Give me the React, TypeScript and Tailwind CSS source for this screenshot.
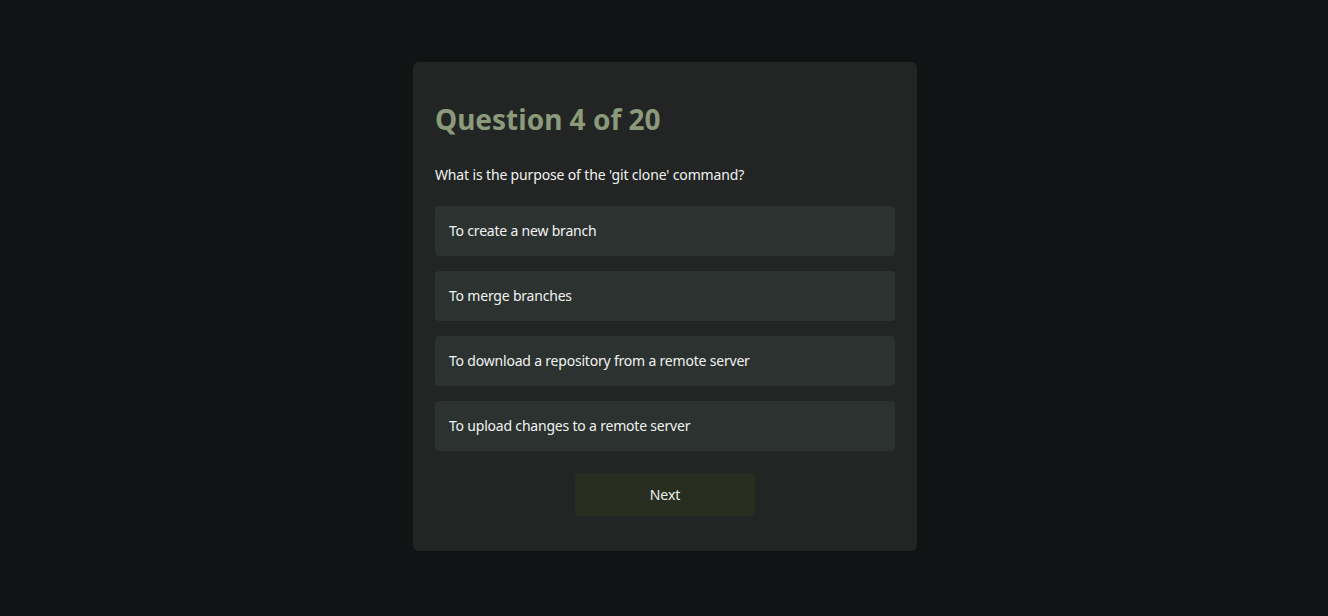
import React from 'react';

const options = [
    'To create a new branch',
    'To merge branches',
    'To download a repository from a remote server',
    'To upload changes to a remote server',
];

export default function App() {
    return (
        <div
            className="min-h-screen w-full flex items-center justify-center bg-[#121314] pb-[4px] pl-[2px]"
            style={{ fontFamily: '"Noto Sans", "Open Sans", sans-serif' }}
        >
            <div className="w-[504px] rounded-md bg-[#222524] px-[22px] pt-[40px] pb-[35px]">
                <h2 className="text-[28px] leading-[34px] font-bold text-[#8a9a7a]">Question 4 of 20</h2>
                <p className="mt-[29px] text-[14px] leading-[20px] tracking-[-0.15px] text-[#f0f2f0]">
                    What is the purpose of the 'git clone' command?
                </p>
                <div className="mt-[21px] flex flex-col gap-[15px]">
                    {options.map((option) => (
                        <button
                            key={option}
                            className="h-[50px] w-full rounded-[4px] bg-[#2c3230] px-[14px] text-left text-[14px] tracking-[-0.2px] text-[#f0f2f0]"
                        >
                            {option}
                        </button>
                    ))}
                </div>
                <div className="mt-[22px] flex justify-center">
                    <button className="h-[43px] w-[180px] rounded-[4px] bg-[#272e20] text-[14px] text-[#eef0ee]">
                        Next
                    </button>
                </div>
            </div>
        </div>
    );
}
